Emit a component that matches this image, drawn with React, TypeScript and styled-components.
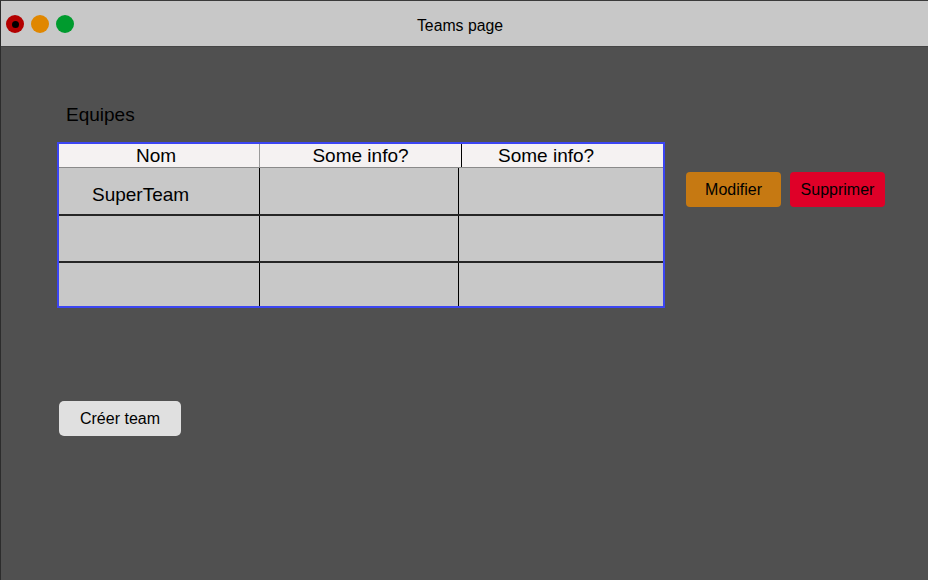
import React from "react";
import styled, { createGlobalStyle } from "styled-components";

const Global = createGlobalStyle`
  html, body { margin: 0; padding: 0; background: #505050; }
  * { box-sizing: border-box; }
`;

const Window = styled.div`
  width: 928px;
  height: 580px;
  display: flex;
  flex-direction: column;
  background: #505050;
  border-left: 1px solid #2c2c2c;
  border-top: 1px solid #3a3a3a;
  font-family: "Liberation Sans", Arial, sans-serif;
  color: #000;
  overflow: hidden;
`;

const TitleBar = styled.div`
  position: relative;
  height: 46px;
  flex: none;
  background: #c8c8c8;
  border-bottom: 1px solid #444;
  display: flex;
  align-items: center;
  justify-content: center;
`;

const Lights = styled.div`
  position: absolute;
  left: 5px;
  top: 14px;
  display: flex;
  gap: 7px;
`;

const Light = styled.div<{ $color: string }>`
  width: 18px;
  height: 18px;
  border-radius: 50%;
  background: ${(p) => p.$color};
  display: flex;
  align-items: center;
  justify-content: center;
`;

const Dot = styled.div`
  width: 7px;
  height: 7px;
  border-radius: 50%;
  background: #000;
`;

const Title = styled.div`
  font-size: 15.8px;
  margin-right: 9px;
  margin-top: 4px;
`;

const Content = styled.div`
  flex: 1;
  display: flex;
  flex-direction: column;
  align-items: flex-start;
  padding: 57px 0 0 56px;
`;

const Heading = styled.div`
  font-size: 19px;
  line-height: 22px;
  margin-left: 9px;
`;

const Row = styled.div`
  display: flex;
  align-items: flex-start;
  margin-top: 16px;
`;

const Table = styled.div`
  width: 608px;
  border: 2px solid #3b45f2;
  display: flex;
  flex-direction: column;
`;

const HeaderRow = styled.div`
  display: grid;
  grid-template-columns: 201px 202px 1fr;
  height: 24px;
  background: #f5f2f2;
  border-bottom: 1px solid #8a8a8a;
`;

const HeaderCell = styled.div<{ $line?: string; $offset?: number; $shift?: number }>`
  display: flex;
  align-items: center;
  justify-content: ${(p) => (p.$offset ? "flex-start" : "center")};
  padding-left: ${(p) => p.$offset ?? 0}px;
  padding-right: ${(p) => p.$shift ?? 0}px;
  font-size: 19px;
  line-height: 22px;
  border-right: ${(p) => (p.$line ? `1px solid ${p.$line}` : "none")};
`;

const BodyRow = styled.div<{ $h: number; $last?: boolean }>`
  display: grid;
  grid-template-columns: 201px 199px 1fr;
  height: ${(p) => p.$h}px;
  background: #c8c8c8;
  border-bottom: ${(p) => (p.$last ? "none" : "2px solid #262626")};
`;

const Cell = styled.div<{ $line?: boolean }>`
  display: flex;
  align-items: center;
  padding: 8px 0 0 33px;
  font-size: 19px;
  border-right: ${(p) => (p.$line ? "1px solid #000" : "none")};
`;

const Actions = styled.div`
  display: flex;
  gap: 9px;
  margin-left: 21px;
  margin-top: 30px;
`;

const ActionButton = styled.button<{ $bg: string; $w: number }>`
  width: ${(p) => p.$w}px;
  height: 35px;
  border: none;
  border-radius: 4px;
  background: ${(p) => p.$bg};
  color: #000;
  font-family: "Liberation Sans", Arial, sans-serif;
  font-size: 16px;
  padding: 0;
`;

const CreateButton = styled.button`
  margin-top: 93px;
  margin-left: 2px;
  width: 122px;
  height: 35px;
  border: none;
  border-radius: 5px;
  background: #e0e0e0;
  color: #000;
  font-family: "Liberation Sans", Arial, sans-serif;
  font-size: 16px;
  padding: 0;
`;

const rows = [
  { name: "SuperTeam", h: 48 },
  { name: "", h: 47 },
  { name: "", h: 43 },
];

export default function App() {
  return (
    <>
      <Global />
      <Window>
        <TitleBar>
          <Lights>
            <Light $color="#b30000">
              <Dot />
            </Light>
            <Light $color="#e08700" />
            <Light $color="#009b2e" />
          </Lights>
          <Title>Teams page</Title>
        </TitleBar>
        <Content>
          <Heading>Equipes</Heading>
          <Row>
            <Table>
              <HeaderRow>
                <HeaderCell $line="#9a9a9a" $shift={6}>Nom</HeaderCell>
                <HeaderCell $line="#000">Some info?</HeaderCell>
                <HeaderCell $offset={36}>Some info?</HeaderCell>
              </HeaderRow>
              {rows.map((r, i) => (
                <BodyRow key={i} $h={r.h} $last={i === rows.length - 1}>
                  <Cell $line>{r.name}</Cell>
                  <Cell $line />
                  <Cell />
                </BodyRow>
              ))}
            </Table>
            <Actions>
              <ActionButton $bg="#c67912" $w={95}>Modifier</ActionButton>
              <ActionButton $bg="#df0028" $w={95}>Supprimer</ActionButton>
            </Actions>
          </Row>
          <CreateButton>Créer team</CreateButton>
        </Content>
      </Window>
    </>
  );
}
